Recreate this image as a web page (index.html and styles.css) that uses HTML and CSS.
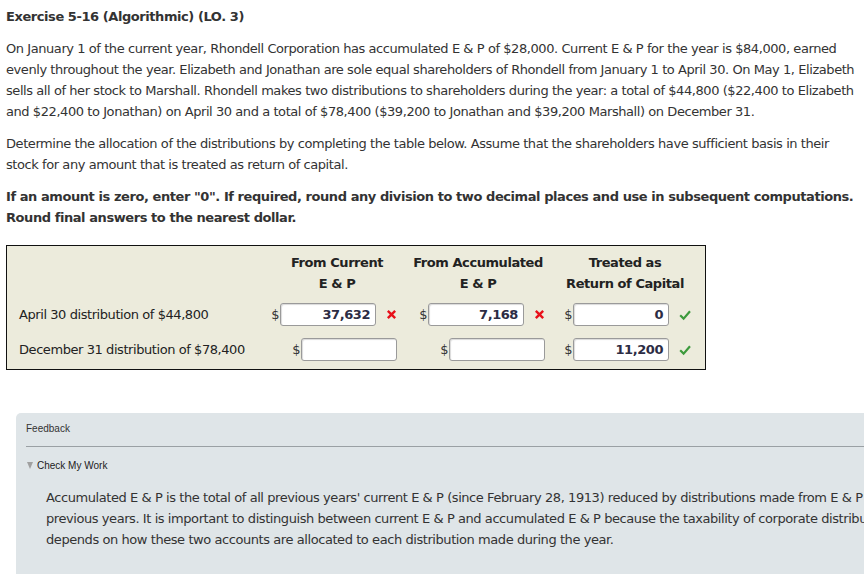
FILE: index.html
```html
<!DOCTYPE html>
<html>
<head>
<meta charset="utf-8">
<link rel="stylesheet" href="styles.css">
</head>
<body>
<div class="page">
  <h1 class="title">Exercise 5-16 (Algorithmic) (LO. 3)</h1>
  <p class="para">On January 1 of the current year, Rhondell Corporation has accumulated E &amp; P of $28,000. Current E &amp; P for the year is $84,000, earned evenly throughout the year. Elizabeth and Jonathan are sole equal shareholders of Rhondell from January 1 to April 30. On May 1, Elizabeth sells all of her stock to Marshall. Rhondell makes two distributions to shareholders during the year: a total of $44,800 ($22,400 to Elizabeth and $22,400 to Jonathan) on April 30 and a total of $78,400 ($39,200 to Jonathan and $39,200 Marshall) on December 31.</p>
  <p class="para">Determine the allocation of the distributions by completing the table below. Assume that the shareholders have sufficient basis in their stock for any amount that is treated as return of capital.</p>
  <p class="para bold">If an amount is zero, enter "0". If required, round any division to two decimal places and use in subsequent computations. Round final answers to the nearest dollar.</p>

  <div class="grid-box">
    <div class="cell head"></div>
    <div class="cell head">From Current<br>E &amp; P</div>
    <div class="cell head">From Accumulated<br>E &amp; P</div>
    <div class="cell head">Treated as<br>Return of Capital</div>

    <div class="cell label">April 30 distribution of $44,800</div>
    <div class="cell amt"><span class="dollar">$</span><span class="inp">37,632</span><svg class="mark" viewBox="0 0 12 12" width="11" height="11"><path d="M2 2 L10 10 M10 2 L2 10" stroke="#e8101a" stroke-width="2.6" fill="none"/></svg></div>
    <div class="cell amt"><span class="dollar">$</span><span class="inp">7,168</span><svg class="mark" viewBox="0 0 12 12" width="11" height="11"><path d="M2 2 L10 10 M10 2 L2 10" stroke="#e8101a" stroke-width="2.6" fill="none"/></svg></div>
    <div class="cell amt"><span class="dollar">$</span><span class="inp">0</span><svg class="mark" viewBox="0 0 12 12" width="12" height="12"><path d="M1.2 6.2 L4.6 9.6 L11 2.2" stroke="#3c9a3c" stroke-width="2.2" fill="none"/></svg></div>

    <div class="cell label">December 31 distribution of $78,400</div>
    <div class="cell amt"><span class="dollar">$</span><span class="inp"></span></div>
    <div class="cell amt"><span class="dollar">$</span><span class="inp"></span></div>
    <div class="cell amt"><span class="dollar">$</span><span class="inp">11,200</span><svg class="mark" viewBox="0 0 12 12" width="12" height="12"><path d="M1.2 6.2 L4.6 9.6 L11 2.2" stroke="#3c9a3c" stroke-width="2.2" fill="none"/></svg></div>
  </div>

  <div class="feedback">
    <div class="fb-title">Feedback</div>
    <div class="fb-toggle"><span class="tri"></span>Check My Work</div>
    <p class="fb-text">Accumulated E &amp; P is the total of all previous years' current E &amp; P (since February 28, 1913) reduced by distributions made from E &amp; P in<br>previous years. It is important to distinguish between current E &amp; P and accumulated E &amp; P because the taxability of corporate distributions<br>depends on how these two accounts are allocated to each distribution made during the year.</p>
  </div>
</div>
</body>
</html>
```

FILE: styles.css
```css
html, body {
  margin: 0;
  padding: 0;
  background: #ffffff;
  overflow: hidden;
}
.page {
  font-family: "DejaVu Sans", Verdana, sans-serif;
  font-size: 13px;
  letter-spacing: -0.43px;
  line-height: 21px;
  color: #333333;
  padding: 6px 0 0 6px;
  width: 852px;
}
.title {
  font-size: 13px;
  font-weight: bold;
  line-height: 21px;
  margin: 0 0 11px 0;
  color: #333333;
}
.para {
  margin: 0 0 11px 0;
}
.bold {
  font-weight: bold;
  margin-bottom: 17px;
}
.grid-box {
  width: 698px;
  border: 1px solid #111111;
  background: #ecebdc;
  display: grid;
  grid-template-columns: 263px 134px 148px 146px;
  grid-template-rows: 45px 35px 35px;
  padding: 6px 0 2px 0;
}
.cell {
  display: flex;
  align-items: center;
}
.head {
  font-weight: bold;
  text-align: center;
  justify-content: center;
  align-items: flex-start;
  color: #222222;
}
.label {
  padding-left: 12px;
  color: #222222;
}
.amt {
  justify-content: flex-end;
  padding-right: 7px;
}
.dollar {
  color: #333333;
  margin-right: 1px;
}
.inp {
  box-sizing: border-box;
  width: 96px;
  height: 23px;
  background: #ffffff;
  border: 1px solid #9a9a9a;
  border-radius: 3px;
  box-shadow: inset 1px 1px 1px rgba(0,0,0,0.15);
  text-align: right;
  font-weight: bold;
  line-height: 21px;
  padding-right: 5px;
  color: #2c2c44;
}
.mark {
  margin-left: 10px;
  display: block;
}
.feedback {
  margin: 43px 0 0 10px;
  width: 900px;
  height: 170px;
  background: #dfe5e8;
  border-radius: 5px;
  box-sizing: border-box;
  padding: 9px 0 0 10px;
}
.fb-title {
  font-family: "Liberation Sans", Arial, sans-serif;
  font-size: 10px;
  letter-spacing: 0;
  line-height: 14px;
  color: #333333;
  padding-bottom: 10px;
  border-bottom: 1px solid #9aa0a4;
}
.fb-toggle {
  font-family: "Liberation Sans", Arial, sans-serif;
  font-size: 10px;
  letter-spacing: 0;
  line-height: 14px;
  color: #222222;
  margin-top: 12px;
  display: flex;
  align-items: center;
}
.tri {
  width: 0;
  height: 0;
  border-left: 3px solid transparent;
  border-right: 3px solid transparent;
  border-top: 7px solid #a0a0a0;
  margin: 0 4px 1px 1px;
}
.fb-text {
  margin: 14px 0 0 20px;
  white-space: nowrap;
  color: #333333;
}
```
